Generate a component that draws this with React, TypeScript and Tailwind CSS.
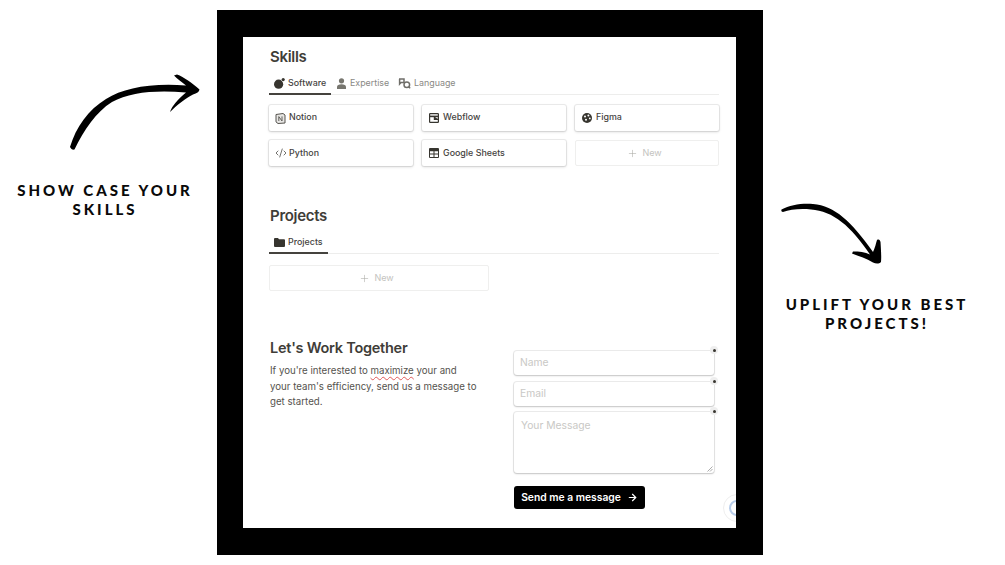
import { Plus, ArrowRight, Code2 } from 'lucide-react';
import type { ReactNode } from 'react';

const sans = { fontFamily: 'Inter, "Liberation Sans", sans-serif' };

function AppleIcon() {
  return (
    <svg width="11" height="11" viewBox="0 0 11 11" fill="#37352f" className="shrink-0">
      <circle cx="4.6" cy="6.2" r="4.6" />
      <circle cx="9.2" cy="1.6" r="1.6" />
    </svg>
  );
}

function UserIcon() {
  return (
    <svg width="11" height="11" viewBox="0 0 11 11" fill="#77766f" className="shrink-0">
      <circle cx="5.5" cy="2.8" r="2.6" />
      <path d="M1 11V9c0-1.8 1.8-2.8 4.5-2.8S10 7.2 10 9v2z" />
    </svg>
  );
}

function FolderIcon() {
  return (
    <svg width="11" height="9" viewBox="0 0 11 9" fill="#37352f" className="shrink-0">
      <path d="M0 1a1 1 0 0 1 1-1h3l1 1.2h5a1 1 0 0 1 1 1V8a1 1 0 0 1-1 1H1a1 1 0 0 1-1-1z" />
    </svg>
  );
}

function LangIcon() {
  return (
    <svg width="13" height="11" viewBox="0 0 13 11" fill="none" stroke="#6f6e69" strokeWidth="1.5" className="shrink-0">
      <path d="M1 1h5v3.5H3L1.6 6V1z" />
      <circle cx="8.8" cy="6.8" r="2.8" />
      <path d="M10.6 8.8l1.6 1.4" />
    </svg>
  );
}

function NotionIcon() {
  return (
    <svg width="11" height="11" viewBox="0 0 11 11" fill="#e7e6e4" stroke="#55534e" strokeWidth="1">
      <path d="M1 1.5l7-1 2 1.5v8l-7 .5-2-1.6z" />
      <path d="M3.8 8V3.6l3.2 4.4V3.4" strokeWidth="0.9" fill="none" />
    </svg>
  );
}

function WebflowIcon() {
  return (
    <svg width="10" height="10" viewBox="0 0 10 10" fill="none" stroke="#37352f" strokeWidth="1.2">
      <rect x="0.6" y="0.6" width="8.8" height="8.8" rx="0.6" />
      <path d="M0.6 3.4h8.8" strokeWidth="1.6" />
      <path d="M5.4 3.4v3H9.4" fill="#37352f" />
    </svg>
  );
}

function FigmaIcon() {
  return (
    <svg width="10" height="10" viewBox="0 0 10 10">
      <circle cx="5" cy="5" r="5" fill="#37352f" />
      <circle cx="3" cy="3.4" r="1" fill="#fff" />
      <circle cx="6.4" cy="2.6" r="1" fill="#fff" />
      <circle cx="7.8" cy="5.4" r="0.9" fill="#fff" />
      <circle cx="4" cy="6.8" r="1" fill="#fff" />
    </svg>
  );
}

function SheetIcon() {
  return (
    <svg width="10" height="10" viewBox="0 0 10 10" fill="#37352f">
      <path d="M0 1a1 1 0 0 1 1-1h8a1 1 0 0 1 1 1v8a1 1 0 0 1-1 1H1a1 1 0 0 1-1-1z" />
      <path d="M1 3.2h3.5v2.2H1zM5.5 3.2H9v2.2H5.5zM1 6.4h3.5V9H1zM5.5 6.4H9V9H5.5z" fill="#fff" />
    </svg>
  );
}

function Card({ icon, label, inset, lift }: { icon: ReactNode; label: string; inset: string; lift: string }) {
  return (
    <div className={`flex h-[26px] items-center rounded-[2px] bg-white shadow-[0_0_0_1px_rgba(15,15,15,0.07),0_1px_3px_rgba(15,15,15,0.16)] ${inset}`}>
      <span className="flex w-[14px] shrink-0 items-center justify-start">{icon}</span>
      <span className={`text-[8.9px] font-medium text-[#45433e] ${lift}`}>{label}</span>
    </div>
  );
}

function NewCard({ className }: { className?: string }) {
  return (
    <div className={`flex items-center justify-center gap-[4px] rounded-[2px] border border-[#efefee] bg-white pr-[5px] text-[9px] text-[#c4c3c0] ${className ?? ''}`}>
      <Plus size={11} strokeWidth={1.2} color="#a9a8a4" />
      <span>New</span>
    </div>
  );
}

function Tab({ icon, label, active, width }: { icon: ReactNode; label: string; active?: boolean; width: string }) {
  return (
    <div className={`-mb-[1px] flex h-[23px] items-center gap-[3px] pl-[5px] text-[8.9px] ${width} ${active ? 'border-b-2 border-[#45433e] pt-[1px] font-medium text-[#45433e]' : 'pb-[1px] text-[#8a8985]'}`}>
      {icon}
      <span>{label}</span>
    </div>
  );
}

function Dot() {
  return (
    <span className="absolute -right-[4px] -top-[5px] flex h-[8px] w-[8px] items-center justify-center rounded-full bg-[#eeeeee]">
      <span className="h-[3px] w-[3px] rounded-full bg-[#37352f]" />
    </span>
  );
}

const fieldCls =
  'relative rounded-[3px] bg-white pl-[6px] text-[10.3px] text-[#c9c8c5] shadow-[0_0_0_1px_rgba(15,15,15,0.08),0_1px_2px_rgba(15,15,15,0.18)]';

const headingCls = 'pl-[1px] text-[15px] font-semibold leading-[20px] tracking-[-0.3px] text-[#3f3d38]';

const noteCls = 'w-full text-center text-[15px] font-black leading-[19px] tracking-[3px] text-[#0a0a0a]';

export default function App() {
  return (
    <div className="flex h-[565px] w-[1005px] overflow-hidden bg-white" style={sans}>
      {/* left note */}
      <div className="flex w-[217px] shrink-0 flex-col items-center pt-[74px]">
        <svg width="217" height="78" viewBox="0 74 217 78" className="shrink-0">
          <path
            d="M70 147C76 127 88 110 106 99C124 88 150 83 186 85.5C182 82 177 79 174 75.5L177 74.5C184 77 192 83 199.5 89.5C199 92 197 93 193 94.5C186 98 177 105 170 112C172 106 178 99 186 92.5C156 90 130 92 112 102C96 112 84 130 74.5 149.5C72.5 150 71 149 70 147Z"
            fill="#000"
          />
        </svg>
        <div className={`${noteCls} mt-[29px] pr-[7px]`} style={{ fontFamily: 'Lato, sans-serif' }}>
          <div>SHOW CASE YOUR</div>
          <div>SKILLS</div>
        </div>
      </div>

      {/* framed page */}
      <div className="mt-[10px] h-[545px] w-[546px] shrink-0 border-y-[27px] border-l-[26px] border-r-[27px] border-black">
        <div className="relative h-full w-full overflow-hidden bg-white pl-[26px] pr-[17px] pt-[10px] text-[#37352f]">
          <h2 className={headingCls}>Skills</h2>
          <div className="mt-[5px] flex border-b border-[#ededec]">
            <Tab active width="w-[62px]" icon={<AppleIcon />} label="Software" />
            <Tab width="w-[62px]" icon={<UserIcon />} label="Expertise" />
            <Tab width="w-[70px]" icon={<LangIcon />} label="Language" />
          </div>
          <div className="mt-[10px] grid grid-cols-3 gap-x-[9px] gap-y-[9px] [grid-auto-rows:26px]">
            <Card inset="pl-[6px]" lift="pb-[2px]" icon={<NotionIcon />} label="Notion" />
            <Card inset="pl-[7px]" lift="pb-[2px]" icon={<WebflowIcon />} label="Webflow" />
            <Card inset="pl-[7px]" lift="pb-[2px]" icon={<FigmaIcon />} label="Figma" />
            <Card inset="pl-[6px]" lift="pb-[1px]" icon={<Code2 size={12} strokeWidth={1.4} color="#37352f" />} label="Python" />
            <Card inset="pl-[7px]" lift="pb-[1px]" icon={<SheetIcon />} label="Google Sheets" />
            <NewCard />
          </div>

          <h2 className={`${headingCls} mt-[40px]`}>Projects</h2>
          <div className="mt-[5px] flex border-b border-[#ededec]">
            <Tab active width="w-[59px]" icon={<FolderIcon />} label="Projects" />
          </div>
          <NewCard className="mt-[11px] h-[26px] w-[220px]" />

          <div className="mt-[47px] flex">
            <div className="w-[245px] shrink-0">
              <h2 className="pl-[1px] text-[14.5px] font-semibold leading-[20px] tracking-[-0.25px] text-[#3f3d38]">Let's Work Together</h2>
              <p className="mt-[5px] whitespace-nowrap pl-[1px] text-[9.7px] leading-[15.5px] text-[#55534e]">
                If you're interested to{' '}
                <span className="underline decoration-[#e05a5a] decoration-wavy decoration-1 underline-offset-2">maximize</span>{' '}
                your and
                <br />
                your team's efficiency, send us a message to
                <br />
                get started.
              </p>
            </div>
            <div className="flex w-[200px] shrink-0 flex-col pt-[13px]">
              <div className={`${fieldCls} flex h-[24px] items-center`}>
                Name
                <Dot />
              </div>
              <div className={`${fieldCls} mt-[7px] flex h-[24px] items-center`}>
                Email
                <Dot />
              </div>
              <div className={`${fieldCls} mt-[6px] h-[61px] pl-[7px] pt-[6px]`}>
                Your Message
                <Dot />
                <svg width="6" height="6" viewBox="0 0 6 6" className="absolute bottom-[1px] right-[1px]" stroke="#888" strokeWidth="0.7">
                  <path d="M0.5 5.5l5-5M3 5.5l2.5-2.5" />
                </svg>
              </div>
              <button className="mt-[13px] flex h-[23px] w-[131px] items-center justify-center gap-[6px] rounded-[3px] bg-black text-[10.3px] font-semibold text-white">
                Send me a message
                <ArrowRight size={11} strokeWidth={2.6} />
              </button>
            </div>
          </div>

          {/* floating help button, cut off by the frame */}
          <div className="absolute -right-[15px] bottom-[6px] flex h-[28px] w-[28px] items-center justify-center rounded-full border border-[#eeeeee] bg-white">
            <span className="h-[16px] w-[16px] rounded-full border-2 border-[#b8cdea]" />
          </div>
        </div>
      </div>

      {/* right note */}
      <div className="flex w-[242px] shrink-0 flex-col items-center pt-[203px]">
        <svg width="242" height="62" viewBox="763 203 242 62" className="shrink-0">
          <path
            d="M781.5 209.5C790 205 802 203 813 204C835 206 851 221 873 252C875 248 876 243 877 240C879 239 880 240 880.5 242C881 250 881.5 257 881 262C879 264 876 264 873 262.5C866 258 858 256 852 253.5L853 251.5C859 251.5 865 252 870 254.5C851 226 833 211 811 209.5C800 208.5 790 209.5 783 212C781.5 212 781 211 781.5 209.5Z"
            fill="#000"
          />
        </svg>
        <div className={`${noteCls} mt-[30px] pr-[14px]`} style={{ fontFamily: 'Lato, sans-serif' }}>
          <div>UPLIFT YOUR BEST</div>
          <div>PROJECTS!</div>
        </div>
      </div>
    </div>
  );
}
